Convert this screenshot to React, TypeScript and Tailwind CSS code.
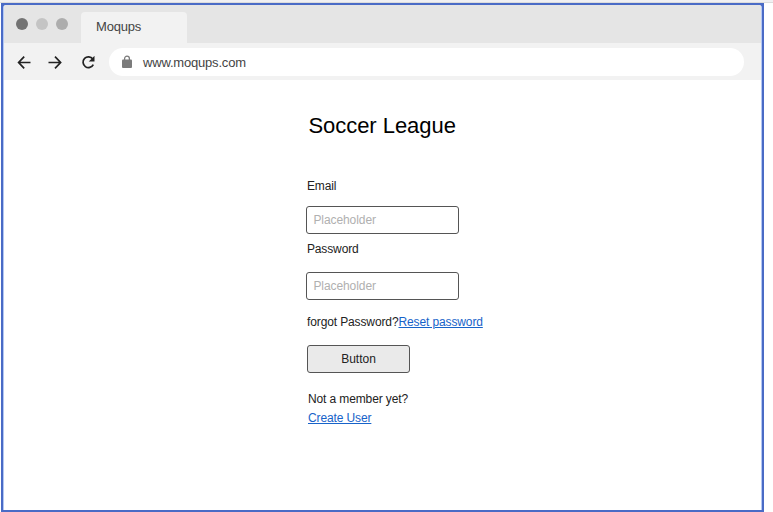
import React from "react";

function BrowserChrome() {
  return (
    <header>
      <div className="flex h-[38px] items-end bg-[#e5e5e5]">
        <div className="flex w-[77px] gap-2 self-start pl-3 pt-[13px]">
          <span className="size-3 rounded-full bg-[#737373]" />
          <span className="size-3 rounded-full bg-[#c4c4c4]" />
          <span className="size-3 rounded-full bg-[#adadad]" />
        </div>
        <div className="h-[31px] w-[106px] rounded-t bg-[#f2f2f2] pl-[15px] text-[13px] leading-[29px] tracking-[-0.2px] text-[#444]">
          Moqups
        </div>
      </div>
      <nav className="flex h-[37px] items-center bg-[#f2f2f2] pl-[13px]">
        <svg className="h-5 w-[92px] shrink-0" viewBox="0 0 92 20" fill="none" stroke="#222" strokeWidth="1.7">
          <path d="M13.5 10.5H1.8M7.2 4.7 1.6 10.5l5.6 5.8" />
          <path d="M31.5 10.5h12M38 4.7l5.6 5.8-5.6 5.8" />
          <path d="M75.8 7A5.4 5.4 0 1 0 76.3 12.6" />
          <path d="M77.5 3.8v5.8h-5.8l2.4-2.4z" fill="#222" stroke="none" />
        </svg>
        <div className="flex h-7 w-[635px] items-center rounded-full bg-white pl-[13px]">
          <svg className="h-[13px] w-[10px]" viewBox="0 0 10 13">
            <path d="M2.6 5V3.6a2.4 2.4 0 0 1 4.8 0V5" fill="none" stroke="#7b7b7b" strokeWidth="1.3" />
            <rect x="0" y="4.5" width="10" height="8.5" rx="1" fill="#7b7b7b" />
          </svg>
          <span className="ml-[11px] pt-[2px] text-[13px] leading-5 tracking-[-0.19px] text-[#444]">www.moqups.com</span>
        </div>
      </nav>
    </header>
  );
}

function Field({ label, className }: { label: string; className: string }) {
  return (
    <label className="block">
      <span className="block pl-[0.5px] leading-4">{label}</span>
      <input
        placeholder="Placeholder"
        className={
          "block h-7 w-[153px] rounded-[3px] border border-[#555] bg-white px-[6px] text-[12px] tracking-[-0.08px] outline-none placeholder:text-[#b0b0b0] " +
          className
        }
      />
    </label>
  );
}

export default function App() {
  return (
    <div className="h-[512px] w-[773px] overflow-hidden bg-white font-['Liberation_Sans',Arial,sans-serif] text-[12px] tracking-[-0.12px] text-[#222]">
      <div className="h-[3px] border-b border-[#dcdcdc] bg-[#f0f0f2]" />
      <div className="ml-px h-[509px] w-[763px] border-2 border-[#4a6bc6] bg-[#4a6bc6]">
        <div className="h-full overflow-hidden rounded-t-[3px] border-x border-[#b4c8f4] bg-white">
          <BrowserChrome />
          <main className="ml-[302.4px] pt-[32px]">
            <h1 className="pl-[2px] text-[22px] leading-7 tracking-[-0.04px] text-black">Soccer League</h1>
            <form className="mt-[38px]">
              <Field label="Email" className="mt-3" />
              <div className="h-[7px]" />
              <Field label="Password" className="mt-[15px]" />
              <p className="mt-[14px] pl-[0.6px] leading-4">
                forgot Password?<a href="#" className="text-[#1763c9] underline">Reset password</a>
              </p>
              <button
                type="button"
                className="ml-[0.6px] mt-[15px] block h-7 w-[103px] rounded-[3px] border border-[#555] bg-[#eaeaea] tracking-normal"
              >
                Button
              </button>
            </form>
            <p className="mt-[17px] pl-[1.6px] leading-[19px]">
              Not a member yet?
              <br />
              <a href="#" className="text-[#1763c9] underline">Create User</a>
            </p>
          </main>
        </div>
      </div>
    </div>
  );
}
